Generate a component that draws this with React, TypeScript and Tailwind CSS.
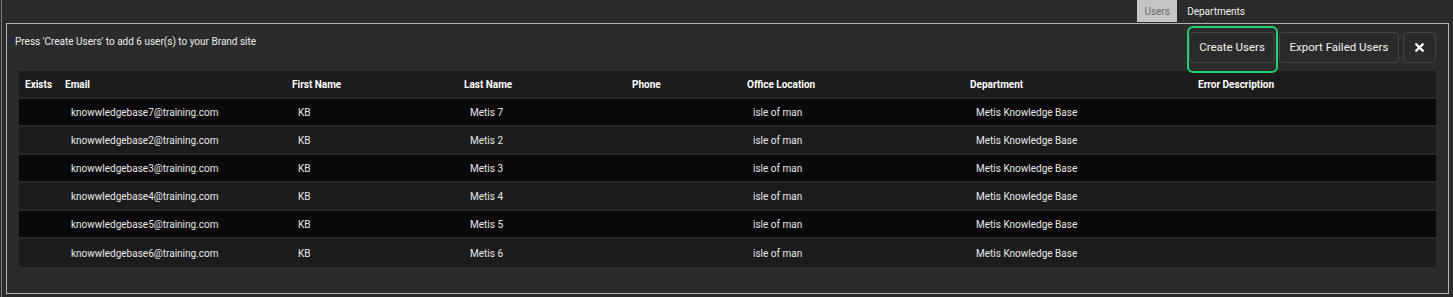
import { X } from "lucide-react";

type Row = {
  email: string;
  first: string;
  last: string;
  phone: string;
  office: string;
  dept: string;
};

const rows: Row[] = [7, 2, 3, 4, 5, 6].map((n) => ({
  email: `knowwledgebase${n}@training.com`,
  first: "KB",
  last: `Metis ${n}`,
  phone: "",
  office: "isle of man",
  dept: "Metis Knowledge Base",
}));

const cols =
  "grid grid-cols-[40px_227px_172px_168px_115px_223px_228px_1fr] items-center";

export default function App() {
  return (
    <div
      className="h-[297px] w-full bg-[#2b2b2b] pl-px text-[10px] text-[#e8e8e8]"
      style={{ fontFamily: "Roboto, 'Liberation Sans', sans-serif" }}
    >
      <div className="h-full border-l border-[#7c7c7c]">
        {/* tabs */}
        <div className="flex h-[22px] items-stretch justify-end pr-[198px]">
          <div className="flex w-[40px] items-center justify-center bg-[#c4c4c4] text-[#6a6a6a]">
            Users
          </div>
          <div className="flex items-center px-[10px] text-[#f0f0f0]">
            Departments
          </div>
        </div>

        {/* panel */}
        <div className="mt-px ml-[4px] mr-[4px] h-[271px] border border-[#b4b4b4] px-3 pt-2">
          <div className="flex h-[31px] items-start justify-between">
            <p className="-ml-1 pt-[2px] text-[#ececec]">
              Press 'Create Users' to add 6 user(s) to your Brand site
            </p>
            <div className="flex gap-[4px]">
              <div className="relative">
                <div className="pointer-events-none absolute -top-[6px] -bottom-[10px] -left-[2px] -right-[3px] rounded-[6px] border-2 border-[#21d36a]" />
                <button className="h-[31px] w-[86px] rounded-[4px] border border-[#454545] bg-[#2b2b2b] text-[11.5px] text-[#f2f2f2]">
                  Create Users
                </button>
              </div>
              <button className="h-[31px] w-[120px] rounded-[4px] border border-[#454545] bg-[#2b2b2b] text-[11.5px] text-[#f2f2f2]">
                Export Failed Users
              </button>
              <button className="flex h-[31px] w-[33px] items-center justify-center rounded-[4px] border border-[#454545] bg-[#2b2b2b] text-white">
                <X size={13} strokeWidth={4.5} />
              </button>
            </div>
          </div>

          {/* table */}
          <div className="mt-2">
            <div className={`${cols} h-[28px] border-b-2 border-[#272727] bg-[#1c1c1c] font-bold text-white`}>
              <div className="pl-[6px]">Exists</div>
              <div className="pl-[6px]">Email</div>
              <div className="pl-[6px]">First Name</div>
              <div className="pl-[6px]">Last Name</div>
              <div className="pl-[6px]">Phone</div>
              <div className="pl-[6px]">Office Location</div>
              <div className="pl-[6px]">Department</div>
              <div className="pl-[6px]">Error Description</div>
            </div>
            {rows.map((r, i) => (
              <div
                key={r.email}
                className={`${cols} h-[28px] ${i < rows.length - 1 ? "border-b-2 border-[#272727]" : ""} ${i % 2 === 0 ? "bg-[#0a0a0a]" : "bg-[#1c1c1c]"}`}
              >
                <div className="pl-[12px]"></div>
                <div className="pl-[12px]">{r.email}</div>
                <div className="pl-[12px]">{r.first}</div>
                <div className="pl-[12px]">{r.last}</div>
                <div className="pl-[12px]">{r.phone}</div>
                <div className="pl-[12px]">{r.office}</div>
                <div className="pl-[12px]">{r.dept}</div>
                <div className="pl-[12px]"></div>
              </div>
            ))}
          </div>
        </div>
      </div>
    </div>
  );
}
